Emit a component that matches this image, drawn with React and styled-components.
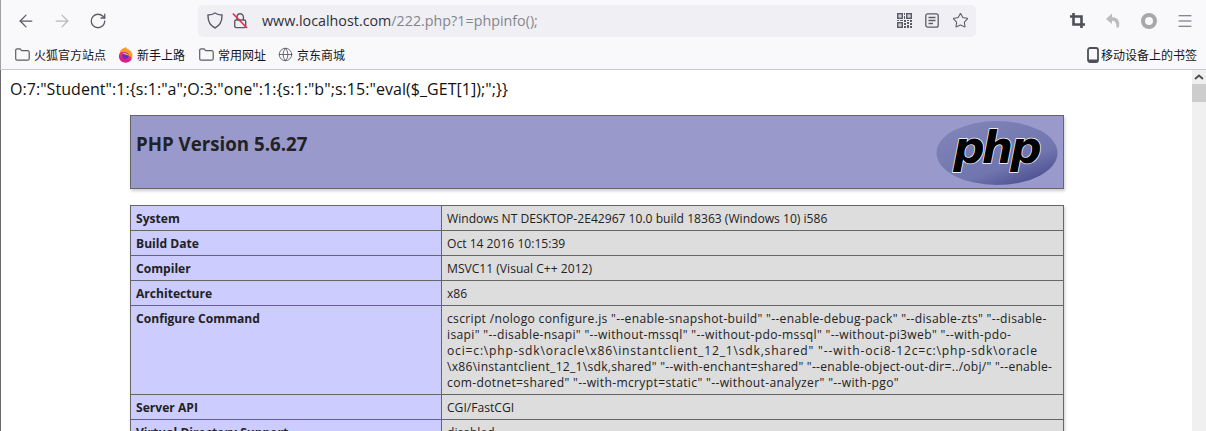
import React from 'react';
import styled, { createGlobalStyle } from 'styled-components';
import { ArrowLeft, ArrowRight, RotateCw, Star, Menu, Globe } from 'lucide-react';

const sans = '"Open Sans", "Noto Sans CJK SC", sans-serif';

const GlobalStyle = createGlobalStyle`
  html, body {
    margin: 0;
    height: 100%;
    overflow: hidden;
    background: #fff;
  }
  body {
    font-family: ${sans};
  }
`;

const Window = styled.div`
  height: 431px;
  display: flex;
  flex-direction: column;
  overflow: hidden;
`;

const Chrome = styled.header`
  background: #f9f9fb;
  border-bottom: 1px solid #c8c8cc;
  border-left: 1px solid #a0a0a4;
  height: 69px;
  flex: none;
`;

const Toolbar = styled.div`
  height: 40px;
  display: flex;
  align-items: center;
  padding: 1px 3px 0 7px;
  box-sizing: border-box;
`;

const ToolButton = styled.span`
  width: 36px;
  height: 32px;
  flex: none;
  display: flex;
  align-items: center;
  justify-content: center;
  color: ${props => (props.$dim ? '#b6b6bc' : '#5b5b66')};
`;

const UrlBar = styled.div`
  width: 778px;
  height: 32px;
  margin-left: 82px;
  margin-right: auto;
  flex: none;
  background: #f0f0f4;
  border-radius: 5px;
  display: flex;
  align-items: center;
  color: #5b5b66;
`;

const UrlIcon = styled.span`
  width: ${props => props.$w || 28}px;
  flex: none;
  display: flex;
  align-items: center;
  justify-content: center;
`;

const UrlText = styled.div`
  flex: 1;
  margin-left: 14px;
  font-size: 14.3px;
  color: #85858d;
  white-space: nowrap;
  b {
    font-weight: 400;
    color: #2f2f38;
  }
`;

const BookmarkBar = styled.div`
  height: 29px;
  display: flex;
  align-items: center;
  padding: 0 9px 0 14px;
  box-sizing: border-box;
`;

const Bookmark = styled.span`
  display: flex;
  align-items: center;
  gap: 4px;
  margin-right: ${props => props.$after ?? 12}px;
  font-size: 12px;
  color: #15141a;
  white-space: nowrap;
  &:last-child {
    margin-right: 0;
    margin-left: auto;
    gap: 2px;
  }
`;

const Viewport = styled.div`
  flex: 1;
  min-height: 0;
  display: flex;
  border-left: 1px solid #696969;
`;

const Page = styled.main`
  flex: 1;
  min-width: 0;
  overflow: hidden;
  background: #fff;
`;

const Scrollbar = styled.div`
  width: 14px;
  flex: none;
  background: #f0f0f0;
  display: flex;
  flex-direction: column;
  align-items: center;
  padding-top: 4px;
  box-sizing: border-box;
`;

const ScrollThumb = styled.div`
  width: 100%;
  height: 18px;
  margin-top: 4px;
  background: #cdcdcd;
`;

const Serialized = styled.p`
  margin: 0;
  padding: 8px 0 0 9px;
  height: 45px;
  box-sizing: border-box;
  font-size: 16px;
  letter-spacing: 0.05px;
  line-height: 22px;
  color: #111;
  white-space: nowrap;
`;

const Center = styled.div`
  width: 934px;
  margin: 0 auto;
  padding-left: 1px;
`;

const Banner = styled.div`
  height: 74px;
  box-sizing: border-box;
  background: #9999cc;
  border: 1px solid #666;
  box-shadow: 1px 2px 3px #ccc;
  display: flex;
  justify-content: space-between;
  padding: 15px 5px 0 5px;
  margin-bottom: 16px;
`;

const Title = styled.h1`
  margin: 0;
  font-size: 18.7px;
  line-height: 26px;
  font-weight: 700;
  color: #222;
`;

const Logo = styled.svg`
  width: 122px;
  height: 66px;
  margin-top: -11px;
  flex: none;
`;

const InfoTable = styled.table`
  width: 934px;
  table-layout: fixed;
  border-collapse: collapse;
  box-shadow: 1px 2px 3px #ccc;
  font-size: 12.1px;
  line-height: 16px;
  color: #222;
`;

const Cell = styled.td`
  border: 1px solid #666;
  padding: 5px 5px 3px;
  vertical-align: top;
  height: 16px;
`;

const LabelCell = styled(Cell)`
  width: 300px;
  background: #ccccff;
  font-weight: 700;
`;

const ValueCell = styled(Cell)`
  background: #dddddd;
`;

const Line = styled.span`
  display: block;
  white-space: nowrap;
  letter-spacing: ${props => props.$track || 0}px;
`;

const Shield = () => (
  <svg width="16" height="17" viewBox="0 0 16 17" fill="none" stroke="#5b5b66" strokeWidth="1.4">
    <path d="M8 1 C10 2.4 12.5 3 15 3 C15.2 9 13 13.5 8 16 C3 13.5 .8 9 1 3 C3.5 3 6 2.4 8 1 Z" />
  </svg>
);

const BrokenLock = () => (
  <svg width="16" height="17" viewBox="0 0 16 17" fill="none">
    <path d="M5 8 V5 a3.2 3.2 0 0 1 6.4 0 V8" stroke="#5b5b66" strokeWidth="1.4" />
    <rect x="2.7" y="8" width="11" height="7.6" rx="1.5" stroke="#5b5b66" strokeWidth="1.4" />
    <path d="M.8 1.5 L15 16" stroke="#e22850" strokeWidth="1.5" />
  </svg>
);

const QrCode = () => (
  <svg width="15" height="15" viewBox="0 0 15 15" fill="#5b5b66">
    <path fillRule="evenodd" d="M0 0h6v6H0zM1.5 1.5v3h3v-3zM9 0h6v6H9zM10.5 1.5v3h3v-3zM0 9h6v6H0zM1.5 10.5v3h3v-3z" />
    <path d="M2.5 2.5h1v1h-1zM11.500 2.500h1v1h-1zM2.500 11.500h1v1h-1zM7 0h1v2H7zM7 3h1v3H7zM0 7h2v1H0zM3 7h3v1H3zM7 7h2v2H7zM10 7h2v1h-2zM13 7h2v2h-2zM7 10h2v2H7zM10 9h2v2h-2zM13 10h2v2h-2zM10 12h2v3h-2zM7 13h2v2H7zM13 13h2v2h-2z" />
  </svg>
);

const ReaderView = () => (
  <svg width="14" height="15" viewBox="0 0 14 15" fill="none" stroke="#5b5b66" strokeWidth="1.3">
    <rect x=".8" y=".8" width="12.400" height="13.400" rx="2" />
    <path d="M3.500 4.500h7M3.500 7.500h7M3.500 10.500h4.500" />
  </svg>
);

const CropIcon = () => (
  <svg width="15" height="15" viewBox="0 0 15 15" fill="none" stroke="#4f4f5a" strokeWidth="2.600">
    <path d="M0 3.500h11.500V15M3.500 0v11.500H15" />
  </svg>
);

const UndoIcon = () => (
  <svg width="14" height="15" viewBox="0 0 14 15" fill="#bbbbc0">
    <path d="M6 .5 L0 6 L6 11 V7.800 C9 7.800 10.500 9.500 10.500 14.500 L12.800 14.500 C14.500 8 11.500 4.200 6 4.200 Z" />
  </svg>
);

const RingIcon = () => (
  <svg width="16" height="16" viewBox="0 0 16 16" fill="none" stroke="#a8a8a8" strokeWidth="4">
    <circle cx="8" cy="8" r="6" />
  </svg>
);

const Folder = () => (
  <svg width="15" height="13" viewBox="0 0 15 13" fill="none" stroke="#5b5b66" strokeWidth="1.200">
    <path d="M.7 2.300 a1.500 1.500 0 0 1 1.500-1.500 h2.800 l1.800 1.900 h5.900 a1.500 1.500 0 0 1 1.500 1.500 v6.500 a1.500 1.500 0 0 1-1.500 1.500 H2.200 a1.500 1.500 0 0 1-1.500-1.500 Z" />
  </svg>
);

const FirefoxMark = () => (
  <svg width="15" height="16" viewBox="0 0 15 16">
    <circle cx="7.500" cy="9" r="6.500" fill="#e8316f" />
    <path d="M2 5 C3 1.500 7 .8 8 0 C8 2 10 2 12 3.500 C14.500 5.500 15 8.500 14 11 C12 9 9 8 8 5.500 C6 5 4 5 2 5 Z" fill="#ff9a1f" />
    <path d="M1 8 C.6 12 3 15.500 7.500 15.500 C11 15.500 13.500 13.500 14 11 C11.500 13.500 5 13.500 1 8 Z" fill="#d61f8c" />
    <circle cx="7.500" cy="8.800" r="3.200" fill="#6a2bc4" />
    <path d="M4.500 6.500 C7 5.500 10 6 10.700 9 C9.500 7.800 7 7.500 4.500 6.500 Z" fill="#ffb52e" />
  </svg>
);

const PhoneIcon = () => (
  <svg width="12" height="16" viewBox="0 0 12 16" fill="none">
    <rect x="1" y="1" width="10" height="14" rx="2" stroke="#4f4f5a" strokeWidth="1.800" />
    <rect x="1" y="12.500" width="10" height="2.500" fill="#4f4f5a" />
  </svg>
);

const PhpLogo = () => (
  <Logo viewBox="0 0 122 66">
    <defs>
      <linearGradient id="ovalShade" x1="0.1" y1="0" x2="0.8" y2="1">
        <stop offset="0" stopColor="#8185b8" />
        <stop offset="0.7" stopColor="#7075ae" />
        <stop offset="1" stopColor="#474b8c" />
      </linearGradient>
    </defs>
    <ellipse cx="61" cy="33" rx="60.500" ry="32" fill="url(#ovalShade)" />
    <text
      x="60"
      y="43"
      textAnchor="middle"
      fontFamily='"DejaVu Sans", sans-serif'
      fontWeight="700"
      fontStyle="italic"
      fontSize="44"
      letterSpacing="-3"
      fill="#000"
      stroke="#fff"
      strokeWidth="1.400"
      paintOrder="stroke"
    >
      php
    </text>
  </Logo>
);

const rows = [
  ['System', [['Windows NT DESKTOP-2E42967 10.0 build 18363 (Windows 10) i586']]],
  ['Build Date', [['Oct 14 2016 10:15:39']]],
  ['Compiler', [['MSVC11 (Visual C++ 2012)']]],
  ['Architecture', [['x86']]],
  [
    'Configure Command',
    [
      ['cscript /nologo configure.js "--enable-snapshot-build" "--enable-debug-pack" "--disable-zts" "--disable-', 0.31],
      ['isapi" "--disable-nsapi" "--without-mssql" "--without-pdo-mssql" "--without-pi3web" "--with-pdo-', 0.34],
      ['oci=c:\\php-sdk\\oracle\\x86\\instantclient_12_1\\sdk,shared" "--with-oci8-12c=c:\\php-sdk\\oracle', 0.81],
      ['\\x86\\instantclient_12_1\\sdk,shared" "--with-enchant=shared" "--enable-object-out-dir=../obj/" "--enable-', 0.26],
      ['com-dotnet=shared" "--with-mcrypt=static" "--without-analyzer" "--with-pgo"', 0.34],
    ],
  ],
  ['Server API', [['CGI/FastCGI']]],
  ['Virtual Directory Support', [['disabled']]],
];

const App = () => (
  <Window>
    <GlobalStyle />
    <Chrome>
      <Toolbar>
        <ToolButton><ArrowLeft size={20} strokeWidth={1.5} /></ToolButton>
        <ToolButton $dim><ArrowRight size={20} strokeWidth={1.5} /></ToolButton>
        <ToolButton><RotateCw size={18} strokeWidth={1.700} /></ToolButton>
        <UrlBar>
          <UrlIcon $w={34}><Shield /></UrlIcon>
          <UrlIcon $w={16}><BrokenLock /></UrlIcon>
          <UrlText><b>www.localhost.com</b>/222.php?1=phpinfo();</UrlText>
          <UrlIcon><QrCode /></UrlIcon>
          <UrlIcon><ReaderView /></UrlIcon>
          <UrlIcon><Star size={17} strokeWidth={1.500} /></UrlIcon>
          <UrlIcon $w={2} />
        </UrlBar>
        <ToolButton><CropIcon /></ToolButton>
        <ToolButton><UndoIcon /></ToolButton>
        <ToolButton><RingIcon /></ToolButton>
        <ToolButton><Menu size={18} strokeWidth={1.300} /></ToolButton>
      </Toolbar>
      <BookmarkBar>
        <Bookmark><Folder />火狐官方站点</Bookmark>
        <Bookmark $after={14}><FirefoxMark />新手上路</Bookmark>
        <Bookmark><Folder />常用网址</Bookmark>
        <Bookmark><Globe size={15} strokeWidth={1.300} color="#4f4f5a" />京东商城</Bookmark>
        <Bookmark><PhoneIcon />移动设备上的书签</Bookmark>
      </BookmarkBar>
    </Chrome>
    <Viewport>
      <Page>
        <Serialized>O:7:"Student":1:{'{'}s:1:"a";O:3:"one":1:{'{'}s:1:"b";s:15:"eval($_GET[1]);";{'}}'}</Serialized>
        <Center>
          <Banner>
            <Title>PHP Version 5.6.27</Title>
            <PhpLogo />
          </Banner>
          <InfoTable>
            <colgroup>
              <col width="311" />
              <col />
            </colgroup>
            <tbody>
              {rows.map(([label, lines]) => (
                <tr key={label}>
                  <LabelCell>{label}</LabelCell>
                  <ValueCell>
                    {lines.map(([text, track]) => <Line key={text} $track={track}>{text}</Line>)}
                  </ValueCell>
                </tr>
              ))}
            </tbody>
          </InfoTable>
        </Center>
      </Page>
      <Scrollbar>
        <svg width="10" height="6" viewBox="0 0 10 6" fill="none" stroke="#505050" strokeWidth="2">
          <path d="M1 5 L5 1.500 L9 5" />
        </svg>
        <ScrollThumb />
      </Scrollbar>
    </Viewport>
  </Window>
);

export default App;
